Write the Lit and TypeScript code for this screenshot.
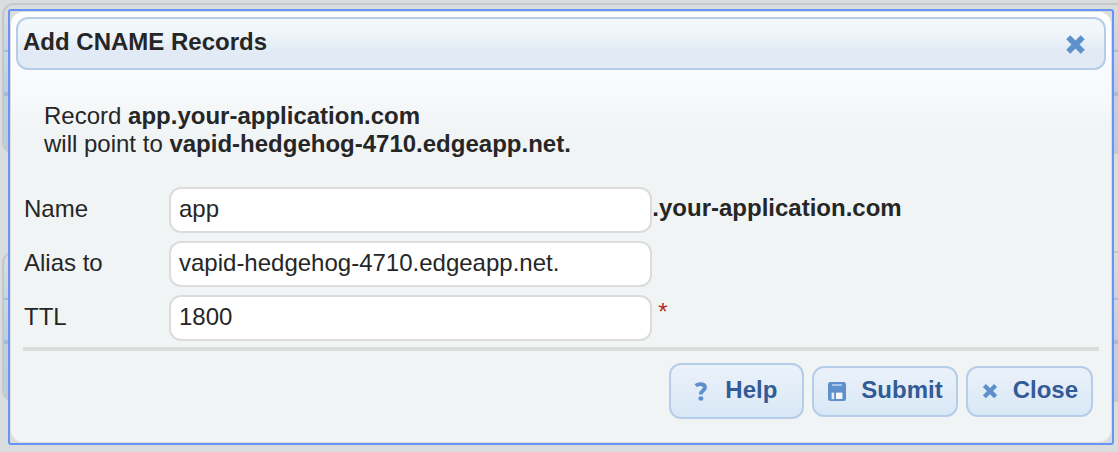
import { LitElement, html, css, svg } from "lit";
import { customElement, property, state } from "lit/decorators.js";

const cross = svg`<path d="M5 5 L15 15 M15 5 L5 15" fill="none" stroke="currentColor" stroke-width="5.4" stroke-linecap="square" stroke-linejoin="round" />`;

const icons = {
  help: svg`<path d="M4.7 4.7 C7 2.8 14 2.1 14 6.6 C14 9.6 9.8 9.6 9.8 13.4" fill="none" stroke="currentColor" stroke-width="3.8" /><rect x="7.6" y="15.6" width="4.6" height="4" rx="1" fill="currentColor" />`,
  save: svg`<path d="M3.5 1 H16.5 Q19 1 19 3.5 V17.5 Q19 20 16.5 20 H3.5 Q1 20 1 17.5 V3.5 Q1 1 3.5 1 Z" fill="currentColor" /><path d="M5 4 H15" stroke="#a6c5e8" stroke-width="2" /><rect x="4.6" y="11.6" width="2.6" height="6.6" fill="#e4eef9" /><rect x="9" y="11.6" width="6.4" height="6.4" fill="#f4f8fd" />`,
  close: cross,
};

@customElement("page-panel")
class PagePanel extends LitElement {
  static styles = css`
    :host {
      display: grid;
      grid-template-rows: 47px 44px 1fr;
      box-sizing: border-box;
      height: 151px;
      border: 2px solid #c6c7c8;
      border-right: 0;
      border-radius: 12px 0 0 12px;
      overflow: hidden;
    }
    .head {
      background: linear-gradient(#d9dddd 10%, #c9d3e0);
      border-bottom: 2px solid #a9bfda;
    }
    .row {
      background: linear-gradient(#cdd7df, #bfcddd);
      border-bottom: 4px solid #a5bcd7;
    }
    .foot {
      background: linear-gradient(#c6d0dc, #bdcbdc);
    }
  `;

  render() {
    return html`<div class="head"></div><div class="row"></div><div class="foot"></div>`;
  }
}

@customElement("action-button")
class ActionButton extends LitElement {
  @property() label = "";
  @property() icon: keyof typeof icons = "close";
  @property({ type: Boolean, reflect: true }) tall = false;

  static styles = css`
    .button {
      display: flex;
      align-items: center;
      gap: 14px;
      box-sizing: border-box;
      height: 51px;
      padding: 0 13px;
      border: 2px solid #b5cde9;
      border-radius: 12px;
      background: linear-gradient(#ebf1fa, #d9e8f6);
      color: #335b96;
      font: bold 24px/28px "Liberation Sans", Arial, sans-serif;
      cursor: pointer;
    }
    :host([tall]) .button {
      height: 56px;
      padding: 0 25px 0 20px;
    }
    .text {
      padding-bottom: 3px;
    }
    .icon {
      width: 20px;
      height: 21px;
      color: #5e90cc;
    }
    .icon.close {
      width: 18px;
      height: 17px;
      gap: 16px;
    }
  `;

  render() {
    return html`<button class="button" type="button">
      <svg class="icon ${this.icon}" viewBox="0 0 20 21" aria-hidden="true">${icons[this.icon]}</svg>
      <span class="text">${this.label}</span>
    </button>`;
  }
}

@customElement("app-root")
class AppRoot extends LitElement {
  @state() private name = "app";
  @state() private alias = "vapid-hedgehog-4710.edgeapp.net.";
  @state() private ttl = "1800";

  static styles = css`
    :host {
      display: block;
      position: relative;
      min-height: 100vh;
      box-sizing: border-box;
      padding: 9px 4px 8px 8px;
      background: #d9dddd;
      color: #262626;
      font: 24px/28px "Liberation Sans", Arial, sans-serif;
      overflow: hidden;
    }
    .backdrop {
      position: absolute;
      inset: 3px 0 0 2px;
      display: flex;
      flex-direction: column;
      gap: 97px;
    }
    .frame {
      position: relative;
      border: 2px solid #6794f5;
      border-radius: 3px;
      background: #dcdcdd;
      padding: 1px;
    }
    .dialog {
      border-radius: 12px;
      background: linear-gradient(#ffffff, #f9fafc 70px, #f0f4f5 125px);
      padding: 5px 5px 23px;
    }
    .header {
      display: flex;
      align-items: center;
      justify-content: space-between;
      box-sizing: border-box;
      height: 53px;
      padding: 0 18px 0 5px;
      border: 2px solid #b5cde9;
      border-radius: 12px;
      background: linear-gradient(#f2f8fa, #f0f5fa 30%, #e1eaf5 65%, #e2ebf5);
    }
    .title {
      margin: 0;
      padding-bottom: 4px;
      font-size: 24px;
      line-height: 28px;
    }
    .dismiss {
      display: flex;
      padding: 2px 0 0;
      border: 0;
      background: none;
      color: #5e90cc;
      cursor: pointer;
    }
    .cross {
      width: 21px;
      height: 21px;
    }
    .summary {
      margin: 32px 28px 29px;
    }
    .fields {
      display: grid;
      gap: 8px;
      padding: 0 8px;
    }
    .field {
      display: flex;
      align-items: center;
    }
    .label {
      width: 145px;
      padding-bottom: 2px;
    }
    .input {
      box-sizing: border-box;
      width: 45%;
      height: 46px;
      margin: 0;
      padding: 0 8px 2px;
      border: 2px solid #dcdcdc;
      border-radius: 12px;
      background: #ffffff;
      color: #262626;
      font: inherit;
      outline: none;
    }
    .suffix {
      padding-bottom: 4px;
    }
    .required {
      padding: 0 0 12px 6px;
      color: #b22a22;
    }
    .rule {
      height: 4px;
      margin: 6px 7px 0;
      border: 0;
      background: #dcdcdc;
    }
    .actions {
      display: flex;
      align-items: center;
      justify-content: flex-end;
      gap: 8px;
      padding: 12px 13px 0;
    }
  `;

  private field(id: string, label: string, value: string, set: (v: string) => void, extra: unknown = "") {
    return html`<div class="field">
      <label class="label" for=${id}>${label}</label>
      <input class="input" id=${id} type="text" .value=${value}
        @input=${(e: Event) => set((e.target as HTMLInputElement).value)} />
      ${extra}
    </div>`;
  }

  render() {
    return html`
      <div class="backdrop" aria-hidden="true">
        <page-panel></page-panel>
        <page-panel></page-panel>
      </div>
      <div class="frame">
        <section class="dialog" role="dialog" aria-labelledby="title">
          <header class="header">
            <h1 class="title" id="title">Add CNAME Records</h1>
            <button class="dismiss" type="button" aria-label="Close dialog">
              <svg class="cross" viewBox="0 0 20 20" aria-hidden="true">${cross}</svg>
            </button>
          </header>
          <p class="summary">
            Record <b>${this.name}.your-application.com</b><br />
            will point to <b>${this.alias}</b>
          </p>
          <form class="fields">
            ${this.field("name", "Name", this.name, (v) => (this.name = v), html`<b class="suffix">.your-application.com</b>`)}
            ${this.field("alias", "Alias to", this.alias, (v) => (this.alias = v))}
            ${this.field("ttl", "TTL", this.ttl, (v) => (this.ttl = v), html`<span class="required">*</span>`)}
          </form>
          <hr class="rule" />
          <div class="actions">
            <action-button tall icon="help" label="Help"></action-button>
            <action-button icon="save" label="Submit"></action-button>
            <action-button icon="close" label="Close"></action-button>
          </div>
        </section>
      </div>
    `;
  }
}
